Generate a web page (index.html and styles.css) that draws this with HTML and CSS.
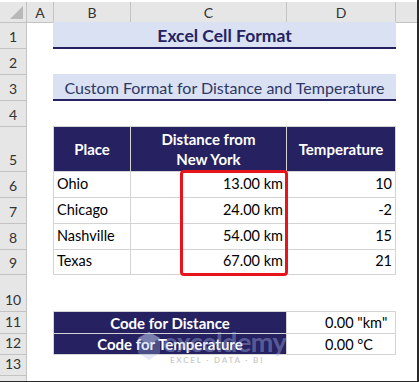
FILE: index.html
```html
<!DOCTYPE html>
<html>
<head>
<meta charset="utf-8">
<link rel="stylesheet" href="styles.css">
</head>
<body>
<div class="frame">
  <div class="colheads">
    <div class="corner"><span class="tri"></span></div>
    <div class="ch ch-first">A</div>
    <div class="ch">B</div>
    <div class="ch">C</div>
    <div class="ch">D</div>
    <div class="ch"></div>
  </div>
  <div class="body">
    <div class="rowheads">
      <div class="rh">1</div>
      <div class="rh">2</div>
      <div class="rh">3</div>
      <div class="rh">4</div>
      <div class="rh">5</div>
      <div class="rh">6</div>
      <div class="rh">7</div>
      <div class="rh">8</div>
      <div class="rh">9</div>
      <div class="rh">10</div>
      <div class="rh">11</div>
      <div class="rh">12</div>
      <div class="rh">13</div>
      <div class="rh rh-last"></div>
    </div>
    <div class="cells">
      <div class="band title">Excel Cell Format</div>
      <div class="band subtitle">Custom Format for Distance and Temperature</div>
      <div class="table">
        <div class="th">Place</div>
        <div class="th">Distance from<br>New York</div>
        <div class="th">Temperature</div>
        <div class="td">Ohio</div><div class="td num">13.00 km</div><div class="td num">10</div>
        <div class="td">Chicago</div><div class="td num">24.00 km</div><div class="td num">-2</div>
        <div class="td">Nashville</div><div class="td num">54.00 km</div><div class="td num">15</div>
        <div class="td">Texas</div><div class="td num">67.00 km</div><div class="td num">21</div>
        <div class="highlight"></div>
      </div>
      <div class="codes">
        <div class="code-label">Code for Distance</div>
        <div class="code-value">0.00 "km"</div>
        <div class="code-label">Code for Temperature</div>
        <div class="code-value">0.00 °C</div>
      </div>
    </div>
    <div class="watermark">
      <svg class="wm-logo" width="24" height="30" viewBox="0 0 24 30">
        <polygon points="12,1 23,7 23,22 12,29 1,22 1,7" fill="rgba(170,185,225,0.3)"/>
        <polygon points="12,1 23,7 12,14 1,7" fill="rgba(205,215,240,0.35)"/>
      </svg>
      <div class="wm-text">
        <div class="wm-name">exceldemy</div>
        <div class="wm-sub">EXCEL · DATA · BI</div>
      </div>
    </div>
  </div>
</div>
</body>
</html>
```
FILE: styles.css
```css
html, body {
  margin: 0;
  padding: 0;
  background: #ffffff;
}

.frame {
  box-sizing: border-box;
  width: 419px;
  height: 382px;
  padding-top: 2px;
  border-right: 2px solid #2a2a2a;
  border-bottom: 1px solid #2a2a2a;
  display: flex;
  flex-direction: column;
  font-family: "Lato", "Liberation Sans", sans-serif;
  color: #000;
  overflow: hidden;
}

.colheads {
  display: grid;
  grid-template-columns: 27px 26px 77px 156px 109px 1fr;
  height: 21px;
  box-sizing: border-box;
  background: #e6e6e6;
  border-bottom: 1px solid #c3c3c3;
}

.corner {
  position: relative;
  border-right: 1px solid #c3c3c3;
}

.tri {
  position: absolute;
  right: 3px;
  bottom: 3px;
  width: 13px;
  height: 13px;
  background: #b8b8b8;
  clip-path: polygon(100% 0, 100% 100%, 0 100%);
}

.ch {
  display: flex;
  align-items: center;
  justify-content: center;
  border-left: 1px solid #c3c3c3;
  font-size: 14px;
  color: #333;
  padding-top: 1px;
}

.ch-first {
  border-left: none;
}

.body {
  --rows: 26px 26px 26px 26px 45px 26px 26px 26px 25px 37px 22px 21px 21px 1fr;
  flex: 1;
  display: flex;
  position: relative;
}

.rowheads {
  width: 27px;
  display: grid;
  grid-template-rows: var(--rows);
  background: #e6e6e6;
  border-right: 1px solid #c3c3c3;
  box-sizing: border-box;
}

.rh {
  border-bottom: 1px solid #c3c3c3;
  display: flex;
  align-items: flex-end;
  justify-content: center;
  font-size: 14px;
  color: #333;
  padding-bottom: 3px;
  box-sizing: border-box;
}

.rh-last {
  border-bottom: none;
}

.cells {
  flex: 1;
  display: grid;
  grid-template-columns: 26px 77px 156px 109px 1fr;
  grid-template-rows: var(--rows);
}

.band {
  grid-column: 2 / 5;
  margin-top: -1px;
  margin-right: -1px;
  background: #d9e1f2;
  border-bottom: 2px solid #262261;
  display: flex;
  align-items: center;
  justify-content: center;
  color: #262261;
  box-sizing: border-box;
}

.title {
  grid-row: 1;
  font-weight: bold;
  font-size: 17.5px;
  padding-top: 1px;
}

.subtitle {
  grid-row: 3;
  font-size: 16px;
  color: #2f3766;
  padding-top: 1px;
}

.table {
  grid-column: 2 / 5;
  grid-row: 5 / 10;
  margin-top: -1px;
  margin-right: -1px;
  position: relative;
  display: grid;
  grid-template-columns: 76px 155px 1fr;
  grid-template-rows: 44px 25px 25px 25px 1fr;
  gap: 1px;
  padding: 1px;
  background: #d4d4d4;
}

.th {
  background: #262261;
  color: #fff;
  font-weight: bold;
  font-size: 15px;
  display: flex;
  align-items: center;
  justify-content: center;
  text-align: center;
  line-height: 20px;
}

.td {
  background: #fff;
  font-size: 14.5px;
  display: flex;
  align-items: flex-end;
  padding: 0 3px 5px 3px;
}

.num {
  justify-content: flex-end;
}

.highlight {
  position: absolute;
  left: 127px;
  top: 44px;
  width: 108px;
  height: 106px;
  box-sizing: border-box;
  border: 3px solid #e8141c;
  border-radius: 4px;
}

.codes {
  grid-column: 2 / 5;
  grid-row: 11 / 13;
  margin-top: -1px;
  margin-right: -1px;
  display: grid;
  grid-template-columns: 232px 1fr;
  grid-template-rows: 21px 1fr;
  gap: 1px;
  padding: 1px;
  background: #d4d4d4;
}

.code-label {
  background: #262261;
  color: #fff;
  font-weight: bold;
  font-size: 15px;
  display: flex;
  align-items: center;
  justify-content: center;
}

.code-value {
  background: #fff;
  font-size: 14.5px;
  display: flex;
  align-items: center;
  padding-left: 38px;
}

.watermark {
  position: absolute;
  left: 137px;
  top: 306px;
  display: flex;
  align-items: flex-start;
  gap: 2px;
  pointer-events: none;
}

.wm-logo {
  margin-top: 2px;
}

.wm-text {
  display: flex;
  flex-direction: column;
  align-items: flex-end;
}

.wm-name {
  font-size: 27px;
  font-weight: bold;
  color: rgba(170, 185, 230, 0.4);
  line-height: 26px;
  letter-spacing: -0.5px;
}

.wm-sub {
  font-size: 8px;
  font-weight: bold;
  letter-spacing: 1.8px;
  color: rgba(160, 160, 160, 0.55);
  line-height: 10px;
  margin-right: 22px;
}
```
